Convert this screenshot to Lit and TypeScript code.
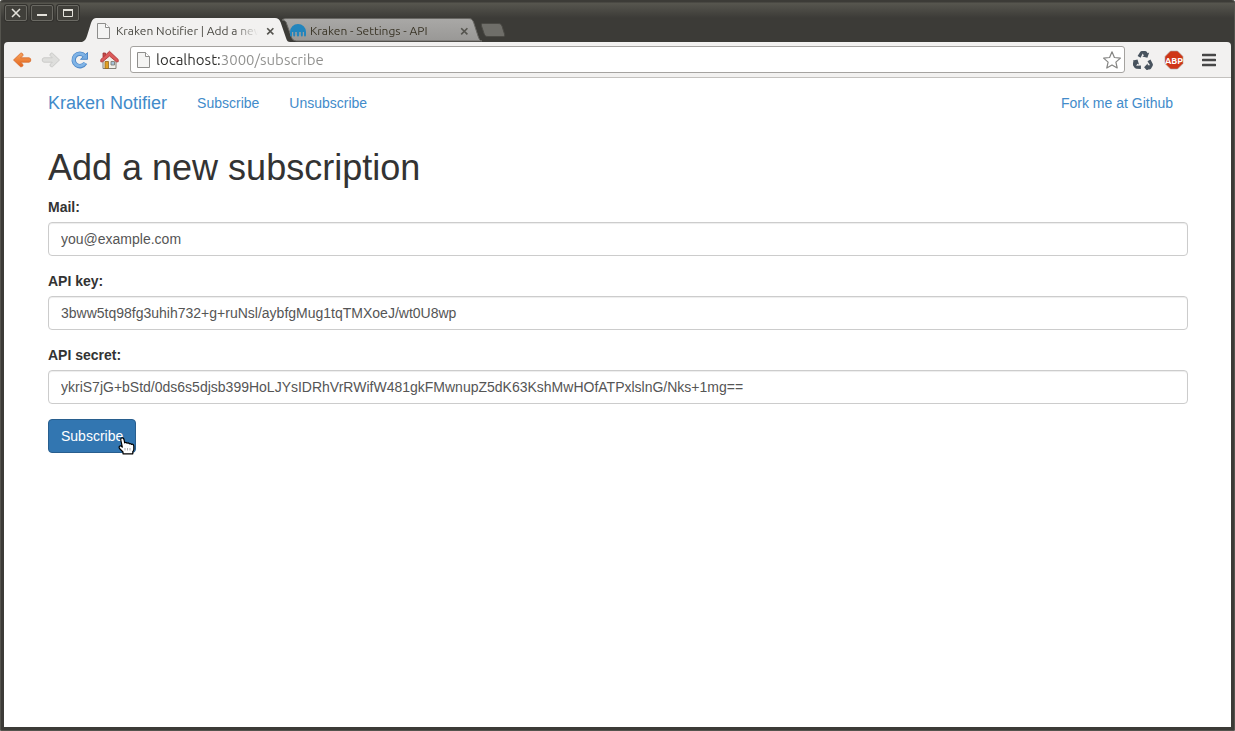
import { LitElement, html, svg, css } from "lit";
import { customElement } from "lit/decorators.js";

const pageIcon = html`<svg class="page-icon" width="16" height="18" viewBox="0 0 16 18" aria-hidden="true">
  <path d="M1.5 1.5h8l4 4v11h-12z" fill="#f4f4f3" stroke="#8e8e8c" />
  <path d="M9.5 1.5v4h4" fill="#fff" stroke="#8e8e8c" />
</svg>`;

const cross = html`<svg width="9" height="9" viewBox="0 0 9 9" aria-hidden="true">
  <path d="M1.2 1.2l6.2 6.2M7.4 1.2L1.2 7.4" stroke="currentColor" stroke-width="1.6" />
</svg>`;

@customElement("window-titlebar")
class WindowTitlebar extends LitElement {
  static styles = css`
    :host { display: flex; gap: 4px; padding: 5px 0 0 1px; height: 18px; box-sizing: border-box; }
    .control {
      width: 22px; height: 16px; padding: 0; display: grid; place-items: center; flex: none;
      border: 1px solid #6b6a64; border-radius: 2px; background: #403f3a;
      box-shadow: 0 0 0 1px #33322e; color: #e3e1da;
    }
  `;
  render() {
    return html`
      <button class="control" aria-label="Close window">
        <svg width="10" height="10" viewBox="0 0 10 10"><path d="M1 1l8 8M9 1L1 9" stroke="currentColor" stroke-width="1.6" /></svg>
      </button>
      <button class="control" aria-label="Minimize window">
        <svg width="10" height="10" viewBox="0 0 10 10"><path d="M0 7h10" stroke="currentColor" stroke-width="2" /></svg>
      </button>
      <button class="control" aria-label="Maximize window">
        <svg width="10" height="10" viewBox="0 0 10 10"><path d="M.5 1v7.5h9V1" fill="none" stroke="currentColor" /><path d="M0 2h10" stroke="currentColor" stroke-width="2" /></svg>
      </button>
    `;
  }
}

@customElement("tab-strip")
class TabStrip extends LitElement {
  static styles = css`
    :host {
      display: flex; height: 24px; padding-left: 78px;
      font: 12px/24px Ubuntu, "Noto Sans", sans-serif; color: #4a4943;
    }
    .tab { display: grid; flex: none; width: 208px; height: 24px; }
    .tab > * { grid-area: 1 / 1; }
    .active { z-index: 1; }
    .inactive { margin-left: -14px; color: #3a3527; }
    .content { display: flex; align-items: center; gap: 4px; padding: 1px 12px 0 14px; min-width: 0; z-index: 1; }
    .title {
      flex: 1; min-width: 0; overflow: hidden; white-space: nowrap;
      mask-image: linear-gradient(to right, #000 calc(100% - 24px), transparent);
    }
    .close { border: 0; padding: 0; width: 16px; height: 16px; display: grid; place-items: center; background: none; color: #55544f; }
    .new-tab { flex: none; border: 0; padding: 0; margin: 4px 0 0 -4px; width: 26px; height: 16px; background: none; }
  `;
  render() {
    return html`
      <div class="tab active">
        <svg width="208" height="24" viewBox="0 0 208 24"><path d="M0 24C3 23 4 21 5 18L9 5C10.500 1 12 0 15 0H193C196 0 197 1 198.500 4L204 20C205 23 206 24 208 24Z" fill="#f2f1f0" /></svg>
        <div class="content">
          ${pageIcon}<span class="title">Kraken Notifier | Add a new</span>
          <button class="close" aria-label="Close tab">${cross}</button>
        </div>
      </div>
      <div class="tab inactive">
        <svg width="208" height="24" viewBox="0 0 208 24">
          <defs><linearGradient id="g" x2="0" y2="1"><stop stop-color="#a9a8a6" /><stop offset="1" stop-color="#999896" /></linearGradient></defs>
          <path d="M6 2C8 .5 9 .5 12 .5H192C195 .5 196 1 197.500 4L202 18C203 21 204 23 206 23H22C17 23 16 21 15 18L10 4C9 3 8 2 6 2Z" fill="url(#g)" stroke="#686763" />
        </svg>
        <div class="content">
          <svg width="16" height="16" viewBox="0 0 16 16" aria-hidden="true">
            <path d="M0 12V9a8 8 0 0 1 16 0v3q0 1.500-1 1.500t-1-1.500V9h-1.200v3q0 1.500-1 1.500t-1-1.500V9H9.200v3q0 1.500-1.200 1.500T6.800 12V9H5.200v3q0 1.500-1 1.500t-1-1.500V9H2v3q0 1.500-1 1.500T0 12z" fill="#2285bd" />
          </svg>
          <span class="title">Kraken - Settings - API</span>
          <button class="close" aria-label="Close tab">${cross}</button>
        </div>
      </div>
      <button class="new-tab" aria-label="New tab">
        <svg width="26" height="16" viewBox="0 0 26 16"><path d="M3 1.500H18C20 1.500 21 2 22 4L24.500 12C25 14 24.500 14.500 23 14.500H8C6 14.500 5 14 4.200 12L1.500 4C1 2 1.500 1.500 3 1.500Z" fill="#6f6e69" stroke="#4b4a45" /></svg>
      </button>
    `;
  }
}

@customElement("browser-toolbar")
class BrowserToolbar extends LitElement {
  static styles = css`
    :host {
      display: flex; align-items: center; height: 36px; box-sizing: border-box; padding: 0 10px 0 6px;
      background: #f2f1f0; border-bottom: 1px solid #c3c1be; border-radius: 4px 4px 0 0;
    }
    .tool { flex: none; display: grid; place-items: center; width: 24px; height: 24px; border: 0; padding: 0; background: none; }
    .nav { display: flex; gap: 5px; }
    .omnibox {
      flex: 1; min-width: 0; box-sizing: border-box; height: 27px; margin: 0 6px 0 9px; padding: 0 0 0 5px;
      display: flex; align-items: center; gap: 4px;
      background: #fff; border: 1px solid #a5a3a0; border-radius: 3px;
    }
    .url {
      flex: 1; min-width: 0; border: 0; padding: 0; outline: 0; height: 24px;
      font: 15px/24px Ubuntu, "Noto Sans", sans-serif; color: transparent;
      background: linear-gradient(to right, #2e2e2c 65px, #8f8f8d 65px); background-clip: text;
    }
    .extensions { display: flex; gap: 7px; }
    .menu { margin-left: 11px; }
  `;
  render() {
    return html`
      <nav class="nav" aria-label="Browser">
        <button class="tool" aria-label="Back">
          <svg width="20" height="18" viewBox="0 0 20 18">
            <defs><linearGradient id="o" x2="0" y2="1"><stop stop-color="#f7a25b" /><stop offset="1" stop-color="#e4641c" /></linearGradient></defs>
            <path d="M1.500 9L8.500 2.300Q10 1.500 10.800 3T10.300 5.200L8.700 6.800H17Q18.800 7 18.800 9T17 11.200H8.700L10.300 12.800Q11.500 14 10.800 15T8.500 15.700Z" fill="url(#o)" stroke="#d5692b" stroke-width=".8" stroke-linejoin="round" />
          </svg>
        </button>
        <button class="tool" aria-label="Forward">
          <svg width="20" height="18" viewBox="0 0 20 18">
            <path d="M18.500 9L11.500 2.300Q10 1.500 9.200 3T9.700 5.200L11.300 6.800H3Q1.200 7 1.200 9T3 11.200H11.300L9.700 12.800Q8.500 14 9.200 15T11.500 15.700Z" fill="#dededc" stroke="#cbcbc9" stroke-linejoin="round" />
          </svg>
        </button>
        <button class="tool" aria-label="Reload">
          <svg width="18" height="18" viewBox="0 0 18 18">
            <path d="M13.500 4.800A6.200 6.200 0 1 0 14.300 12" fill="none" stroke="#5089c8" stroke-width="4.400" />
            <path d="M16.500 1.500V8.300H9.500Z" fill="#75abe0" stroke="#5089c8" stroke-linejoin="round" />
            <path d="M13.500 4.800A6.200 6.200 0 1 0 14 12" fill="none" stroke="#80b4e6" stroke-width="2.800" />
          </svg>
        </button>
        <button class="tool" aria-label="Home">
          <svg width="20" height="20" viewBox="0 0 20 20">
            <path d="M4 10l6.500-6 6.500 6v8.500H4z" fill="#f1efe9" stroke="#77736a" stroke-width=".9" />
            <path d="M4 3h2.500v4H4z" fill="#c84848" stroke="#9c3434" stroke-width=".8" />
            <path d="M10.500 1.300L1.800 9.500v2.300h1.800L10.500 6l6.900 5.800h1.800V9.500Z" fill="#dc5a5a" stroke="#b03a3a" stroke-width=".9" stroke-linejoin="round" />
            <path d="M6 11.500h3.500v7H6z" fill="#e2a024" stroke="#94671a" stroke-width=".8" />
            <path d="M12 11.500h3.500v3.500H12z" fill="#a7c4dc" stroke="#77736a" stroke-width=".8" />
          </svg>
        </button>
      </nav>
      <div class="omnibox">
        ${pageIcon}
        <input class="url" type="text" aria-label="Address" spellcheck="false" .value=${"localhost:3000/subscribe"} />
        <button class="tool" aria-label="Bookmark this page">
          <svg width="20" height="20" viewBox="0 0 20 20"><path d="M10 1.800L12.400 7.500L18.400 8.100L13.900 12.100L15.200 18L10 14.900L4.800 18L6.100 12.100L1.600 8.100L7.600 7.500Z" fill="#fff" stroke="#858583" stroke-width="1.200" stroke-linejoin="round" /></svg>
        </button>
      </div>
      <div class="extensions">
        <button class="tool" aria-label="Recycle">
          <svg width="20" height="20" viewBox="0 0 20 20" fill="#48535e">
            ${[0, 120, 240].map(
              (a) => svg`<g transform="rotate(${a} 10 11.5)"><path d="M4.600 6L7 2.200Q7.700 1 9 1H12Q13.200 1 13.900 2.100L14.600 3.300L16.200 2.400L14.400 7.700L9.300 6.500L10.900 5.500L9.700 3.500L7.600 7.700Z" /></g>`,
            )}
          </svg>
        </button>
        <button class="tool" aria-label="Adblock Plus">
          <svg width="20" height="20" viewBox="0 0 20 20">
            <path d="M6.500 1h7L19 6.500v7L13.500 19h-7L1 13.500v-7z" fill="#cf3616" stroke="#a9a6a3" stroke-width=".6" />
            <text x="10" y="13.500" text-anchor="middle" font-family="Ubuntu, Roboto, sans-serif" font-weight="700" font-size="9" fill="#fff">ABP</text>
          </svg>
        </button>
      </div>
      <button class="tool menu" aria-label="Menu">
        <svg width="14" height="14" viewBox="0 0 14 14"><path d="M1 2h12M1 7h12M1 12h12" stroke="#474747" stroke-width="2.600" stroke-linecap="round" /></svg>
      </button>
    `;
  }
}

@customElement("subscribe-page")
class SubscribePage extends LitElement {
  static styles = css`
    :host {
      display: block; flex: 1; min-height: 0; padding-left: 1px; background: #fff; overflow: hidden;
      font: 14px/20px "Liberation Sans", Arial, sans-serif; color: #333;
    }
    .container { max-width: 1170px; margin: 0 auto; padding: 0 15px; box-sizing: border-box; }
    .navbar { display: flex; align-items: center; height: 50px; }
    a { color: #428bca; text-decoration: none; padding: 15px; }
    .brand { font-size: 18px; padding-left: 0; }
    .right { margin-left: auto; }
    h1 { font-size: 36px; line-height: 39px; font-weight: 500; margin: 20px 0 10px; }
    .group { margin-bottom: 15px; }
    label { display: block; font-weight: 700; margin-bottom: 5px; }
    .field {
      display: block; width: 100%; height: 34px; box-sizing: border-box; padding: 6px 12px;
      font: inherit; color: #555; background: #fff;
      border: 1px solid #ccc; border-radius: 4px; box-shadow: inset 0 1px 1px rgba(0, 0, 0, 0.075);
    }
    .submit-row { display: flex; }
    .submit {
      position: relative; height: 34px; padding: 6px 12px; font: inherit; color: #fff;
      background: #3276b1; border: 1px solid #285e8e; border-radius: 4px; cursor: pointer;
    }
    .pointer { position: absolute; right: 0; bottom: -3px; }
  `;
  render() {
    const fields = [
      { id: "mail", label: "Mail:", value: "you@example.com" },
      { id: "key", label: "API key:", value: "3bww5tq98fg3uhih732+g+ruNsl/aybfgMug1tqTMXoeJ/wt0U8wp" },
      { id: "secret", label: "API secret:", value: "ykriS7jG+bStd/0ds6s5djsb399HoLJYsIDRhVrRWifW481gkFMwnupZ5dK63KshMwHOfATPxlslnG/Nks+1mg==" },
    ];
    return html`
      <div class="container">
        <nav class="navbar">
          <a class="brand" href="#">Kraken Notifier</a>
          <a href="#subscribe">Subscribe</a>
          <a href="#unsubscribe">Unsubscribe</a>
          <a class="right" href="#github">Fork me at Github</a>
        </nav>
        <h1>Add a new subscription</h1>
        <form @submit=${(e: Event) => e.preventDefault()}>
          ${fields.map(
            (f) => html`<div class="group">
              <label for=${f.id}>${f.label}</label>
              <input class="field" type="text" id=${f.id} name=${f.id} spellcheck="false" .value=${f.value} />
            </div>`,
          )}
          <div class="submit-row">
            <button class="submit" type="submit">
              Subscribe
              <svg class="pointer" width="17" height="18" viewBox="0 0 17 18" aria-hidden="true">
                <path d="M3.500 1Q5.500 .5 6 2.500L6.700 5.800Q8 5 9 6.200Q10.500 5.500 11.500 6.800Q12.500 6.200 13.500 7.300Q15.500 6.800 15.800 9V12.500Q15.500 14 14.800 14.500V16.800H5V15L1.500 11.500Q.5 9.500 2 9Q3.300 8.800 4.300 10.200L2.800 3Q2.500 1.500 3.500 1Z" fill="#fff" stroke="#000" stroke-width="1.200" stroke-linejoin="round" />
                <path d="M7 11v2.500M9.500 11v2.500M12 11v2.500" stroke="#999" stroke-width=".8" />
              </svg>
            </button>
          </div>
        </form>
      </div>
    `;
  }
}

@customElement("app-root")
class AppRoot extends LitElement {
  static styles = css`
    :host {
      display: flex; flex-direction: column; box-sizing: border-box; height: 100vh; padding: 0 4px 4px;
      background: linear-gradient(#3c3b37 0 2px, #57564f 3px, #3c3b37 18px);
      box-shadow: inset 1px 0 #55544e, inset -1px 0 #55544e, inset 0 -1px #55544e;
      border-radius: 3px 3px 2px 2px;
    }
  `;
  render() {
    return html`
      <window-titlebar></window-titlebar>
      <tab-strip></tab-strip>
      <browser-toolbar></browser-toolbar>
      <subscribe-page></subscribe-page>
    `;
  }
}
